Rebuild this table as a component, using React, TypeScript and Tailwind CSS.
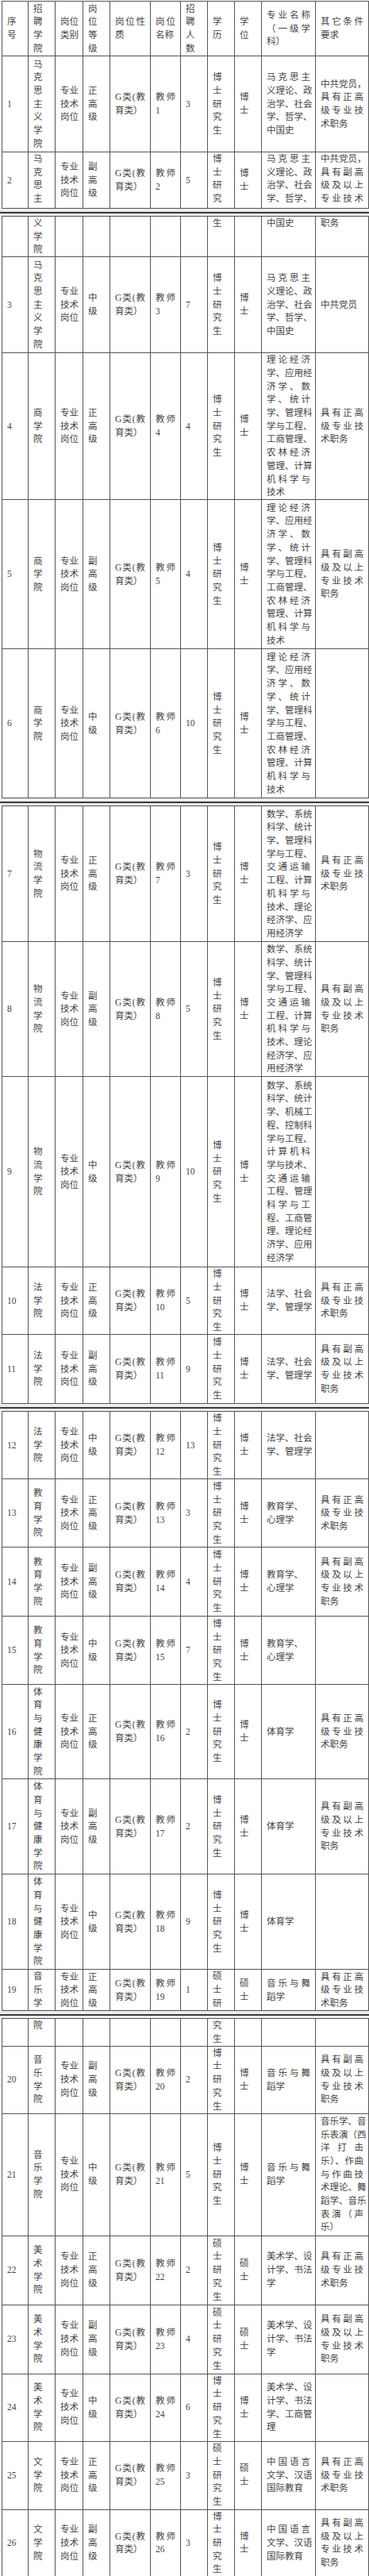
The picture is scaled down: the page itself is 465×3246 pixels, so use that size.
import clsx from "clsx";

type Cell = string | { t: string; top?: boolean; nj?: boolean; all?: boolean };
type Row = { h: string; cells: Cell[]; tail?: boolean };

const cols = [
  "w-[33px]",
  "w-[34px]",
  "w-[35px]",
  "w-[34px]",
  "w-[51px]",
  "w-[38px]",
  "w-[34px]",
  "w-[34px]",
  "w-[34px]",
  "w-[68px]",
  "w-[67px]",
];

const ZY = "专业/技术/岗位";
const G = "G类(教/育类）";
const Z = "正/高/级";
const F = "副/高/级";
const M = "中/级";
const BS = "博/士/研/究/生";
const BD = "博/士";
const SS = "硕/士/研/究/生";
const SD = "硕/士";
const ZQ = "具有正高/级专业技/术职务";
const FQ = "具有副高/级及以上/专业技术/职务";
const MKS = "马/克/思/主/义/学/院";
const MKSZ = "马克思主/义理论、政/治学、社会/学、哲学、/中国史";
const SHZ =
  "理论经济/学、应用经/济学、数/学、统计/学、管理科/学与工程、/工商管理、/农林经济/管理、计算/机科学与/技术";
const WLZ =
  "数学、系统/科学、统计/学、管理科/学与工程、/交通运输/工程、计算/机科学与/技术、理论/经济学、应/用经济学";
const WL9 =
  "数学、系统/科学、统计/学、机械工/程、控制科/学与工程、/计算机科/学与技术、/交通运输/工程、管理/科学与工/程、工商管/理、理论经/济学、应用/经济学";
const FX = "法学、社会/学、管理学";
const JY = { t: "教育学、/心理学", nj: true };
const TY = "体/育/与/健/康/学/院";
const YY = "音乐与舞/蹈学";
const MS = "美术学、设/计学、书法/学";
const WX = "中国语言/文学、汉语/国际教育";

const pages: Row[][] = [
  [
    {
      h: "h-[69px]",
      cells: [
        "序/号",
        "招/聘/学/院",
        "岗位/类别",
        "岗/位/等/级",
        "岗位性/质",
        "岗位/名称",
        "招/聘/人/数",
        "学/历",
        "学/位",
        "专业名称/（一级学/科）",
        "其它条件/要求",
      ],
    },
    {
      h: "h-[121px]",
      cells: ["1", MKS, ZY, Z, G, "教师/1", "3", BS, BD, MKSZ, "中共党员，/具有正高/级专业技/术职务"],
    },
    {
      h: "h-[71px]",
      cells: [
        "2",
        { t: "马/克/思/主", top: true },
        ZY,
        F,
        G,
        "教师/2",
        "5",
        { t: "博/士/研/究", top: true },
        BD,
        { t: "马克思主/义理论、政/治学、社会/学、哲学、", top: true, all: true },
        { t: "中共党员，/具有副高/级及以上/专业技术", top: true, all: true },
      ],
    },
  ],
  [
    {
      h: "h-[50px]",
      cells: [
        "",
        { t: "义/学/院", top: true },
        "",
        "",
        "",
        "",
        "",
        { t: "生", top: true },
        "",
        { t: "中国史", top: true },
        { t: "职务", top: true },
      ],
    },
    { h: "h-[121px]", cells: ["3", MKS, ZY, M, G, "教师/3", "7", BS, BD, MKSZ, "中共党员"] },
    { h: "h-[185px]", cells: ["4", "商/学/院", ZY, Z, G, "教师/4", "4", BS, BD, SHZ, ZQ] },
    { h: "h-[188px]", cells: ["5", "商/学/院", ZY, F, G, "教师/5", "4", BS, BD, SHZ, FQ] },
    { h: "h-[188px]", cells: ["6", "商/学/院", ZY, M, G, "教师/6", "10", BS, BD, SHZ, ""] },
  ],
  [
    { h: "h-[171px]", cells: ["7", "物/流/学/院", ZY, Z, G, "教师/7", "3", BS, BD, WLZ, ZQ] },
    { h: "h-[170px]", cells: ["8", "物/流/学/院", ZY, F, G, "教师/8", "5", BS, BD, WLZ, FQ] },
    { h: "h-[240px]", cells: ["9", "物/流/学/院", ZY, M, G, "教师/9", "10", BS, BD, WL9, ""] },
    { h: "h-[85px]", cells: ["10", "法/学/院", ZY, Z, G, "教师/10", "5", BS, BD, FX, ZQ] },
    { h: "h-[87px]", cells: ["11", "法/学/院", ZY, F, G, "教师/11", "9", BS, BD, FX, FQ] },
  ],
  [
    { h: "h-[85px]", cells: ["12", "法/学/院", ZY, M, G, "教师/12", "13", BS, BD, FX, ""] },
    { h: "h-[86px]", cells: ["13", "教/育/学/院", ZY, Z, G, "教师/13", "3", BS, BD, JY, ZQ] },
    { h: "h-[87px]", cells: ["14", "教/育/学/院", ZY, F, G, "教师/14", "4", BS, BD, JY, FQ] },
    { h: "h-[86px]", cells: ["15", "教/育/学/院", ZY, M, G, "教师/15", "7", BS, BD, JY, ""] },
    { h: "h-[119px]", cells: ["16", TY, ZY, Z, G, "教师/16", "2", BS, BD, "体育学", ZQ] },
    { h: "h-[120px]", cells: ["17", TY, ZY, F, G, "教师/17", "2", BS, BD, "体育学", FQ] },
    { h: "h-[120px]", cells: ["18", TY, ZY, M, G, "教师/18", "9", BS, BD, "体育学", ""] },
    {
      h: "h-[52px]",
      cells: [
        "19",
        { t: "音/乐/学", top: true },
        ZY,
        Z,
        G,
        "教师/19",
        "1",
        { t: "硕/士/研", top: true },
        SD,
        YY,
        ZQ,
      ],
    },
  ],
  [
    {
      h: "h-[34px]",
      cells: ["", { t: "院", top: true }, "", "", "", "", "", { t: "究/生", top: true }, "", "", ""],
    },
    { h: "h-[85px]", cells: ["20", "音/乐/学/院", ZY, F, G, "教师/20", "2", BS, BD, YY, FQ] },
    {
      h: "h-[154px]",
      cells: [
        "21",
        "音/乐/学/院",
        ZY,
        M,
        G,
        "教师/21",
        "5",
        BS,
        BD,
        YY,
        "音乐学、音/乐表演（西/洋打击/乐）、作曲/与作曲技/术理论、舞/蹈学、音乐/表演（声/乐）",
      ],
    },
    { h: "h-[87px]", cells: ["22", "美/术/学/院", ZY, Z, G, "教师/22", "2", SS, SD, MS, ZQ] },
    { h: "h-[87px]", cells: ["23", "美/术/学/院", ZY, F, G, "教师/23", "4", SS, SD, MS, FQ] },
    {
      h: "h-[85px]",
      cells: ["24", "美/术/学/院", ZY, M, G, "教师/24", "6", BS, BD, "美术学、设/计学、书法/学、工商管/理", ""],
    },
    { h: "h-[86px]", cells: ["25", "文/学/院", ZY, Z, G, "教师/25", "3", SS, SD, WX, ZQ] },
    { h: "h-[84px]", cells: ["26", "文/学/院", ZY, F, G, "教师/26", "3", BS, BD, WX, FQ] },
    { h: "h-[4px]", cells: ["", "", "", "", "", "", "", "", "", "", ""], tail: true },
  ],
];

function TableCell({ c, tail }: { c: Cell; tail?: boolean }) {
  const o = typeof c === "string" ? { t: c } : c;
  const lines = o.t ? o.t.split("/") : [];
  return (
    <td
      className={clsx(
        "border-[#555] px-[6px] py-0",
        tail ? "border-x border-t" : "border",
        "top" in o && o.top ? "align-top" : "align-middle"
      )}
    >
      {lines.map((line, i) => {
        const justify =
          !("nj" in o && o.nj) && (("all" in o && o.all) || i < lines.length - 1);
        return (
          <div
            key={i}
            className={clsx(
              "whitespace-nowrap",
              justify && "text-justify [text-align-last:justify]"
            )}
          >
            {line}
          </div>
        );
      })}
    </td>
  );
}

function Page({ rows }: { rows: Row[] }) {
  return (
    <table className="table-fixed border-collapse w-[462px] ml-[2px]">
      <colgroup>
        {cols.map((w, i) => (
          <col key={i} className={w} />
        ))}
      </colgroup>
      <tbody>
        {rows.map((r, i) => (
          <tr key={i} className={r.h}>
            {r.cells.map((c, j) => (
              <TableCell key={j} c={c} tail={r.tail} />
            ))}
          </tr>
        ))}
      </tbody>
    </table>
  );
}

function PageGap() {
  return (
    <div className="bg-[#ececec] pt-[4px] pb-[3px]">
      <div className="h-[2px] bg-[#3a3a3a]" />
    </div>
  );
}

export default function App() {
  return (
    <div className="w-[465px] bg-white pt-[1px] font-['Liberation_Serif','Noto_Sans_CJK_SC',serif] text-[11.5px] leading-[16.7px] text-[#444]">
      {pages.map((rows, i) => (
        <div key={i}>
          {i > 0 && <PageGap />}
          <Page rows={rows} />
        </div>
      ))}
    </div>
  );
}
